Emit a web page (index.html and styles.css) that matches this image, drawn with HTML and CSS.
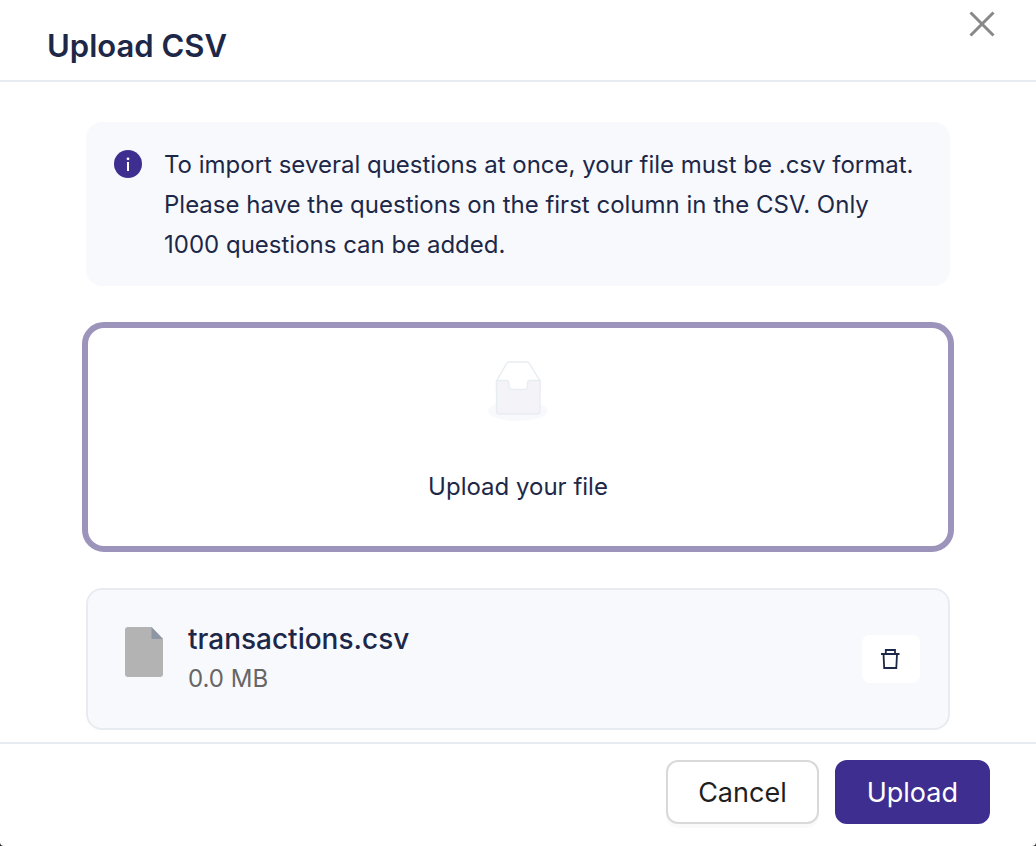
FILE: index.html
```html
<!DOCTYPE html>
<html lang="en">
<head>
    <meta charset="UTF-8">
    <meta name="viewport" content="width=device-width, initial-scale=1.0">
    <title>Upload CSV</title>
    <link rel="stylesheet" href="styles.css">
</head>
<body>
    <div class="modal" role="dialog" aria-labelledby="modalTitle">
        <header class="modal-header">
            <h1 class="modal-title" id="modalTitle">Upload CSV</h1>
            <button class="close-button" type="button" aria-label="Close">
                <svg width="28" height="28" viewBox="0 0 28 28" fill="none" stroke="#888" stroke-width="3">
                    <path d="M2.5 2.5L25.5 25.5M25.5 2.5L2.5 25.5"/>
                </svg>
            </button>
        </header>

        <main class="modal-body">
            <div class="info-box">
                <svg class="info-icon" width="28" height="28" viewBox="0 0 28 28">
                    <circle cx="14" cy="14" r="14" fill="#3d2e8f"/>
                    <circle cx="14" cy="8.8" r="1.4" fill="#fff"/>
                    <rect x="13" y="12" width="2" height="9" fill="#fff"/>
                </svg>
                <p>To import several questions at once, your file must be .csv format. Please have the questions on the first column in the CSV. Only 1000 questions can be added.</p>
            </div>

            <label class="dropzone" for="csvFile">
                <input class="file-input" type="file" id="csvFile" accept=".csv">
                <svg width="60" height="60" viewBox="0 0 60 60">
                    <ellipse cx="30" cy="50" rx="30" ry="10" fill="#f8f9fd"/>
                    <path d="M8.5 20L18.5 2.6Q19.5 1 21 1H39Q40.5 1 41.5 2.6L52 20V30H8.5Z" fill="#fff" stroke="#e8edf2" stroke-width="1.4"/>
                    <path d="M8.5 19.5H18.5Q21 19.5 21 22.5V24Q21 28.5 24.500 28.500H36Q39.500 28.500 39.500 24V22.500Q39.500 19.500 42 19.500H52V50Q52 53 49 53H11.500Q8.500 53 8.500 50Z" fill="#f3f3f8" stroke="#e8edf2" stroke-width="1.4"/>
                </svg>
                <span class="dropzone-text">Upload your file</span>
            </label>

            <div class="file-card">
                <svg width="38" height="50" viewBox="0 0 38 50">
                    <path d="M3 0H26.500L38 12V47Q38 50 35 50H3Q0 50 0 47V3Q0 0 3 0Z" fill="#b3b3b3"/>
                    <path d="M26.500 0L38 12H26.500Z" fill="#8d96a5"/>
                </svg>
                <div class="file-details">
                    <div class="file-name">transactions.csv</div>
                    <div class="file-size">0.0 MB</div>
                </div>
                <button class="delete-button" type="button" aria-label="Delete file">
                    <svg width="20" height="20" viewBox="0 0 20 20" fill="none" stroke="#1d2848" stroke-width="1.8">
                        <path d="M0 5H18.500M4.800 5V1H14V5M2.500 5L3.200 19H15.300L16 5"/>
                    </svg>
                </button>
            </div>
        </main>

        <footer class="modal-footer">
            <button class="btn btn-cancel" type="button">Cancel</button>
            <button class="btn btn-upload" type="button">Upload</button>
        </footer>
    </div>
</body>
</html>
```
FILE: styles.css
```css
* {
    margin: 0;
    padding: 0;
    box-sizing: border-box;
}

body {
    font-family: Inter, 'Liberation Sans', sans-serif;
    background: #222;
    color: #1d2848;
}

svg {
    display: block;
    flex-shrink: 0;
}

button {
    font-family: inherit;
    cursor: pointer;
}

.modal {
    display: flex;
    flex-direction: column;
    min-height: 100vh;
    background: #fff;
    border-radius: 0 0 4px 4px;
}

.modal-header {
    display: flex;
    justify-content: space-between;
    align-items: flex-start;
    padding: 10px 40px 14px 47px;
    border-bottom: 2px solid #e8ecf1;
}

.modal-title {
    font-size: 31px;
    font-weight: 600;
    line-height: 40px;
    padding-top: 16px;
}

.close-button {
    background: none;
    border: none;
}

.modal-body {
    flex: 1;
    padding: 40px 82px 12px;
}

.info-box {
    display: flex;
    gap: 22px;
    margin: 0 4px 36px;
    padding: 23px 28px 21px;
    background: #f8f9fd;
    border-radius: 16px;
    font-size: 24px;
    line-height: 40px;
}

.info-icon {
    margin-top: 5px;
}

.dropzone {
    display: flex;
    flex-direction: column;
    align-items: center;
    gap: 46px;
    margin-bottom: 36px;
    padding: 33px 24px 39px;
    border: 6px solid #9d94bb;
    border-radius: 22px;
    cursor: pointer;
}

.file-input {
    position: absolute;
    opacity: 0;
    width: 1px;
    height: 1px;
}

.dropzone-text {
    font-size: 24px;
    line-height: 40px;
}

.file-card {
    display: flex;
    align-items: center;
    gap: 25px;
    margin: 0 4px;
    padding: 29px 28px 29px 37px;
    background: #f8f9fd;
    border: 2px solid #e8ecf1;
    border-radius: 16px;
}

.file-card > svg {
    margin-bottom: 14px;
}

.file-details {
    flex: 1;
}

.file-name {
    font-size: 28px;
    font-weight: 500;
    line-height: 40px;
}

.file-size {
    color: #666;
    font-size: 24px;
    line-height: 40px;
}

.delete-button {
    display: flex;
    align-items: center;
    justify-content: center;
    width: 58px;
    height: 48px;
    background: #fff;
    border: none;
    border-radius: 8px;
}

.modal-footer {
    display: flex;
    justify-content: flex-end;
    gap: 16px;
    padding: 16px 46px 22px;
    border-top: 2px solid #e8ecf1;
}

.btn {
    height: 64px;
    padding: 0 30px;
    border: 2px solid #d9d9d9;
    border-radius: 12px;
    font-size: 27px;
}

.btn-cancel {
    background: #fff;
    color: #1f1f1f;
    box-shadow: 0 4px 0 rgba(0,0,0,0.02);
}

.btn-upload {
    background: #3d2e8f;
    border-color: #3d2e8f;
    color: #fff;
}
```
